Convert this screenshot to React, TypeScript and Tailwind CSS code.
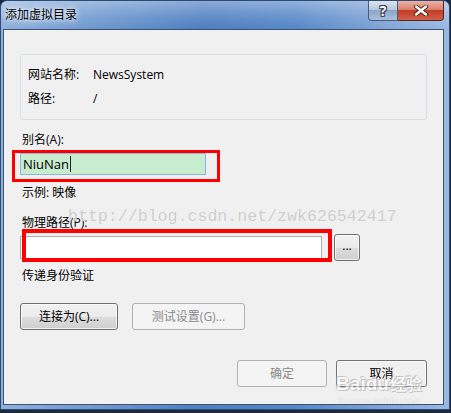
import React from "react"

const btn =
  "h-[27px] rounded-[3px] border border-[#707070] bg-[linear-gradient(180deg,#f2f2f2_0%,#ebebeb_50%,#dddddd_51%,#cfcfcf_100%)] text-[12px] text-black flex items-center justify-center shadow-[inset_0_0_0_1px_rgba(255,255,255,0.7)]"
const btnDisabled =
  "h-[27px] rounded-[3px] border border-[#adb2b5] bg-[#f4f4f4] text-[12px] text-[#8a8a8a] flex items-center justify-center"

export default function App() {
  return (
    <div className="w-[451px] h-[413px] overflow-hidden bg-[#1d2a3e] font-['Segoe_UI','Open_Sans','Noto_Sans_CJK_SC',sans-serif]">
      <div className="w-[450px] h-[410px] flex flex-col rounded-t-[7px] border border-[#2d4a72] bg-[linear-gradient(90deg,#8fb0dc_0%,#6f99d0_20%,#4d7ec2_45%,#5586c8_65%,#7ea3d6_85%,#9ab9e2_100%)]">
        {/* title bar */}
        <div className="h-[28px] flex items-start justify-between bg-[linear-gradient(180deg,rgba(255,255,255,0.35)_0%,rgba(255,255,255,0.1)_60%,rgba(255,255,255,0)_100%)] rounded-t-[6px]">
          <div className="pl-[4px] pt-[6px] text-[12px] leading-[16px] text-black [text-shadow:0_0_8px_#fff,0_0_4px_#fff]">
            添加虚拟目录
          </div>
          <div className="flex mr-[5px]">
            <div className="w-[30px] h-[20px] rounded-bl-[4px] border border-t-0 border-[#4a5d78] bg-[linear-gradient(180deg,#dbe5f1_0%,#b8c9df_45%,#8ea7c8_50%,#a9bfdc_100%)] flex items-center justify-center">
              <span className="text-[14px] font-bold leading-none text-white [text-shadow:0_0_1px_#223,1px_1px_0_#33415a,-1px_-1px_0_#33415a,1px_-1px_0_#33415a,-1px_1px_0_#33415a]">
                ?
              </span>
            </div>
            <div className="w-[46px] h-[20px] rounded-br-[4px] border border-t-0 border-l-0 border-[#5a2418] bg-[linear-gradient(180deg,#ebb3a6_0%,#d9806c_45%,#c23c22_50%,#d5604a_100%)] flex items-center justify-center">
              <svg width="16" height="11" viewBox="0 0 16 11">
                <path d="M3 1.5 L13 9.5 M13 1.5 L3 9.5" stroke="#4a1e14" strokeWidth="4.2" strokeLinecap="round" />
                <path d="M3 1.5 L13 9.5 M13 1.5 L3 9.5" stroke="#ffffff" strokeWidth="2.4" strokeLinecap="round" />
              </svg>
            </div>
          </div>
        </div>

        {/* client area */}
        <div className="relative ml-[2px] mr-[5px] h-[376px] overflow-hidden border border-[#3f5370] bg-[#f0f0f0] text-[12px] leading-[16px] text-black flex flex-col">
          <div className="mt-[24px] ml-[16px] w-[407px] h-[66px] rounded-[3px] border border-[#d5dfe5] pl-[7px] pt-[12px] flex flex-col gap-[8px]">
            <div className="flex">
              <span className="w-[65px]">网站名称:</span>
              <span>NewsSystem</span>
            </div>
            <div className="flex">
              <span className="w-[65px]">路径:</span>
              <span>/</span>
            </div>
          </div>

          <div className="mt-[12px] ml-[18px]">别名(A):</div>
          <div className="mt-[5px] ml-[16px] w-[186px] h-[22px] border border-[#86b5e6] bg-[#c7ecce] flex items-center pl-[2px] text-[13px]">
            NiuNan
            <span className="ml-px w-px h-[16px] bg-[#222]" />
          </div>

          <div className="mt-[10px] ml-[18px]">示例: 映像</div>
          <div className="mt-[14px] ml-[18px]">物理路径(P):</div>
          <div className="mt-[3px] ml-[16px] flex items-center gap-[12px]">
            <div className="w-[302px] h-[23px] border border-[#abadb3] bg-white" />
            <div className={btn + " w-[26px] h-[26px] leading-none pb-[4px]"}>...</div>
          </div>

          <div className="mt-[7px] ml-[18px]">传递身份验证</div>

          <div className="mt-[19px] ml-[16px] flex gap-[14px]">
            <div className={btn + " w-[98px]"}>连接为(C)...</div>
            <div className={btnDisabled + " w-[113px]"}>测试设置(G)...</div>
          </div>

          <div className="mt-[30px] mr-[16px] flex justify-end gap-[9px]">
            <div className={btnDisabled + " w-[90px]"}>确定</div>
            <div className={btn + " w-[91px] bg-none bg-[#f0f0f0] border-[#707070]"}>取消</div>
          </div>

          {/* red annotation boxes */}
          <div className="absolute left-[8px] top-[120px] w-[208px] h-[32px] border-[3px] border-[#ff0000] pointer-events-none" />
          <div className="absolute left-[18px] top-[199px] w-[310px] h-[33px] border-[4px] border-[#ff0000] pointer-events-none" />

          {/* csdn watermark */}
          <div className="absolute left-[64px] top-[177px] text-[16.6px] leading-[20px] font-['Liberation_Mono',monospace] text-[#cdcdcd] [text-shadow:0_0_1px_#fff] pointer-events-none">
            http://blog.csdn.net/zwk626542417
          </div>

          {/* baidu watermark */}
          <div className="absolute left-[330px] top-[343px] w-[90px] flex flex-col items-center pointer-events-none opacity-60">
            <div className="flex items-baseline text-[19px] leading-[20px] font-bold font-['Liberation_Sans',sans-serif] text-white [text-shadow:0_0_1px_#888,1px_1px_0_#aaa,-1px_-1px_0_#aaa]">
              <span>Bai</span>
              <span>du</span>
              <span className="text-[16px] font-['Noto_Sans_CJK_SC',sans-serif] ml-[1px]">经验</span>
            </div>
            <div className="text-[11px] leading-[12px] font-['Liberation_Serif',serif] text-white [text-shadow:0_0_1px_#999]">
              jingyan.baidu.com
            </div>
          </div>
        </div>
      </div>
    </div>
  )
}
